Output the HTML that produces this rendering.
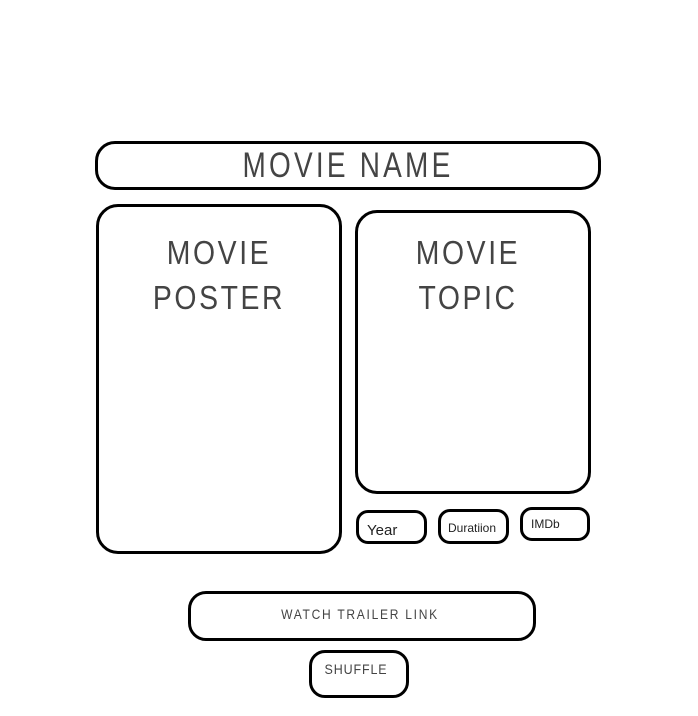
<!DOCTYPE html>
<html><head><style>
body{margin:0;width:698px;height:716px;background:#fff;position:relative;font-family:"Liberation Sans",sans-serif;overflow:hidden}
.b{position:absolute;box-sizing:border-box;border:3px solid #000;background:#fff;color:#222}
.t{position:absolute;left:0;right:0;text-align:center;white-space:nowrap;color:#444}
</style></head><body>
<div class="b" style="left:95px;top:141px;width:506px;height:49px;border-radius:20px">
 <div class="t" style="top:3px;font-size:35px;letter-spacing:4px;line-height:38px;transform:scaleX(0.8)">MOVIE NAME</div>
</div>
<div class="b" style="left:96px;top:204px;width:246px;height:350px;border-radius:22px">
 <div class="t" style="top:23px;font-size:33px;letter-spacing:3px;line-height:45px;transform:scaleX(0.86)">MOVIE<br>POSTER</div>
</div>
<div class="b" style="left:355px;top:210px;width:236px;height:284px;border-radius:22px">
 <div class="t" style="top:17px;font-size:33px;letter-spacing:3px;line-height:45px;transform:scaleX(0.86);left:-10px">MOVIE<br>TOPIC</div>
</div>
<div class="b" style="left:356px;top:510px;width:71px;height:34px;border-radius:12px">
 <div style="position:absolute;left:8px;top:9px;font-size:15px">Year</div>
</div>
<div class="b" style="left:438px;top:509px;width:71px;height:35px;border-radius:12px">
 <div style="position:absolute;left:7px;top:9px;font-size:12px">Duratiion</div>
</div>
<div class="b" style="left:520px;top:507px;width:70px;height:34px;border-radius:12px">
 <div style="position:absolute;left:8px;top:7px;font-size:12px">IMDb</div>
</div>
<div class="b" style="left:188px;top:591px;width:348px;height:50px;border-radius:18px">
 <div class="t" style="top:12px;font-size:14px;letter-spacing:2px;left:-4px;transform:scaleX(0.86)">WATCH TRAILER LINK</div>
</div>
<div class="b" style="left:309px;top:650px;width:100px;height:48px;border-radius:16px">
 <div class="t" style="top:8px;font-size:14px;letter-spacing:1px;left:-6px;transform:scaleX(0.89)">SHUFFLE</div>
</div>
</body></html>
